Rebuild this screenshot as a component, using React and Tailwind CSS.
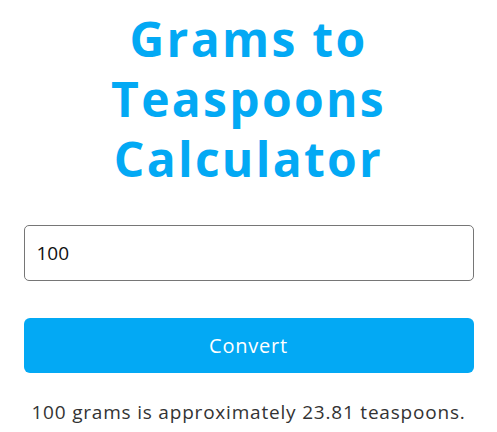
import { useState } from 'react';

export default function App() {
  const [grams, setGrams] = useState('100');
  const [result, setResult] = useState('100 grams is approximately 23.81 teaspoons.');

  function handleConvert() {
    const value = parseFloat(grams);
    if (Number.isNaN(value)) {
      setResult('Please enter a valid number.');
      return;
    }
    setResult(`${value} grams is approximately ${(value / 4.2).toFixed(2)} teaspoons.`);
  }

  return (
    <div className="min-h-screen bg-white font-['Open_Sans',sans-serif]">
      <div className="mx-auto w-[450px] pt-[9px] text-center">
        <h1 className="mx-auto w-[320px] text-[48px] font-bold leading-[60px] tracking-[2.3px] text-[#03a9f4]">
          Grams to Teaspoons Calculator
        </h1>

        <input
          type="text"
          value={grams}
          onChange={(event) => setGrams(event.target.value)}
          className="mt-[36px] block h-[56px] w-full rounded-[5px] border border-[#767676] px-[12px] text-left text-[19px] text-[#111] outline-none"
        />

        <button
          type="button"
          onClick={handleConvert}
          className="mt-[37px] block h-[55px] w-full rounded-[6px] bg-[#03a9f4] text-[20px] tracking-[0.8px] text-white"
        >
          Convert
        </button>

        <p className="mt-[26px] text-[19px] leading-[27px] tracking-[0.8px] text-[#333]">{result}</p>
      </div>
    </div>
  );
}
